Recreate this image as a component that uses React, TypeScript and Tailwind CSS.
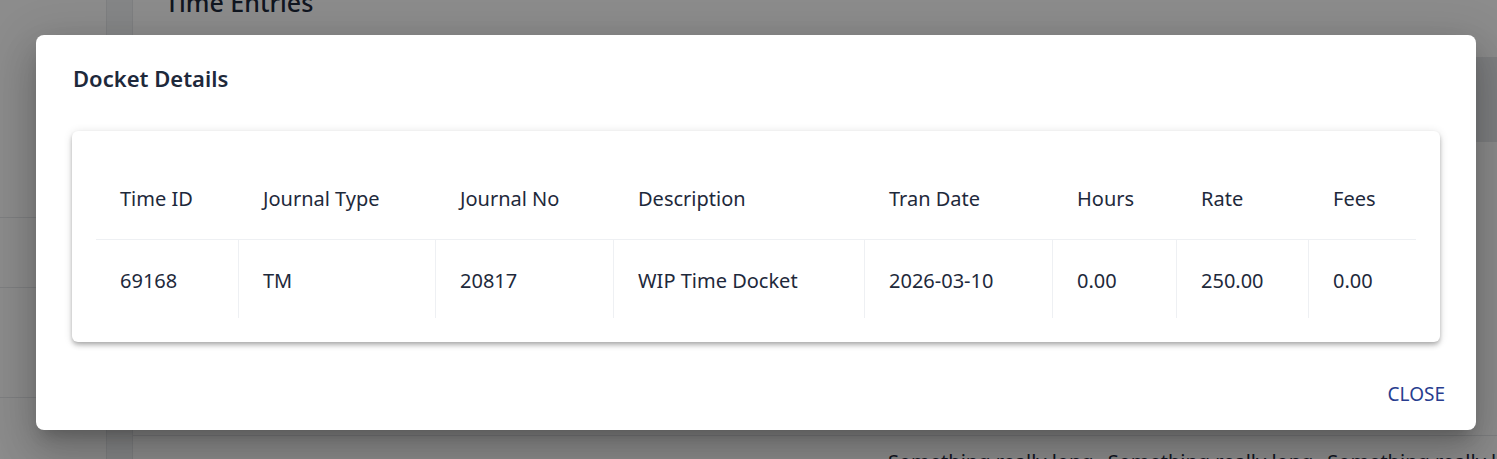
import React from "react";

const cols = [
  { h: "Time ID", v: "69168", w: 143 },
  { h: "Journal Type", v: "TM", w: 197 },
  { h: "Journal No", v: "20817", w: 178 },
  { h: "Description", v: "WIP Time Docket", w: 251 },
  { h: "Tran Date", v: "2026-03-10", w: 188 },
  { h: "Hours", v: "0.00", w: 124 },
  { h: "Rate", v: "250.00", w: 132 },
  { h: "Fees", v: "0.00", w: 107 },
];

export default function App() {
  return (
    <div
      className="relative h-[459px] w-[1497px] overflow-hidden bg-white text-[#1e293b]"
      style={{ fontFamily: '"Noto Sans", "Open Sans", sans-serif' }}
    >
      {/* underlying page */}
      <div className="flex h-full">
        <div className="flex w-[107px] shrink-0 flex-col border-r border-[#e5e7eb]">
          <div className="h-[218px] border-b border-[#e5e7eb]" />
          <div className="h-[70px] border-b border-[#e5e7eb]" />
          <div className="h-[110px] border-b border-[#e5e7eb]" />
        </div>
        <div className="w-[26px] shrink-0 border-r border-[#e5e7eb] bg-[#f3f4f6]" />
        <div className="flex min-w-0 flex-1 flex-col overflow-hidden">
          <div className="-mt-[14px] pl-[32px] text-[25px] font-medium leading-[32px] text-[#1e293b]">
            Time Entries
          </div>
          <div className="flex-1" />
          <div className="h-[24px] border-t border-[#e5e7eb] pl-[755px] pt-[12px] whitespace-nowrap text-[20px] leading-[28px] text-[#1e293b]">
            <span className="mr-[14px]">Something really long</span>
            <span className="mr-[14px]">Something really long</span>
            <span>Something really long</span>
          </div>
        </div>
      </div>
      <div className="absolute right-0 top-[57px] h-[85px] w-[21px] bg-[#e5e7eb]" />

      {/* overlay */}
      <div className="absolute inset-0 bg-black/[0.45]">
        <div className="ml-[36px] mt-[35px] flex h-[395px] w-[1440px] flex-col rounded-[8px] bg-white shadow-[0_11px_15px_-7px_rgba(0,0,0,0.2),0_24px_38px_3px_rgba(0,0,0,0.14),0_9px_46px_8px_rgba(0,0,0,0.12)]">
          <div className="h-[96px] pl-[37px] pt-[27px] text-[22px] font-semibold leading-[32px] text-[#1e293b]">
            Docket Details
          </div>
          <div className="mx-[36px] rounded-[6px] bg-white px-[24px] pb-[24px] pt-[27px] shadow-[0_2px_4px_-1px_rgba(0,0,0,0.2),0_4px_5px_0_rgba(0,0,0,0.14),0_1px_10px_0_rgba(0,0,0,0.12)]">
            <div className="flex h-[82px] border-b border-[#eef0f3]">
              {cols.map((c) => (
                <div
                  key={c.h}
                  className="flex items-center whitespace-nowrap pl-[24px] text-[20px] text-[#1e293b]"
                  style={{ width: c.w }}
                >
                  {c.h}
                </div>
              ))}
            </div>
            <div className="flex h-[78px]">
              {cols.map((c, i) => (
                <div
                  key={c.h}
                  className={
                    i < cols.length - 1
                      ? "flex items-center whitespace-nowrap border-r border-[#eef0f3] pl-[24px] pt-[4px] text-[20px] text-[#1e293b]"
                      : "flex items-center whitespace-nowrap pl-[24px] pt-[4px] text-[20px] text-[#1e293b]"
                  }
                  style={{ width: c.w }}
                >
                  {c.v}
                </div>
              ))}
            </div>
          </div>
          <div className="flex flex-1 items-center justify-end pr-[31px] pt-[17px]">
            <button className="text-[19px] uppercase text-[#283d8f]">
              Close
            </button>
          </div>
        </div>
      </div>
    </div>
  );
}
